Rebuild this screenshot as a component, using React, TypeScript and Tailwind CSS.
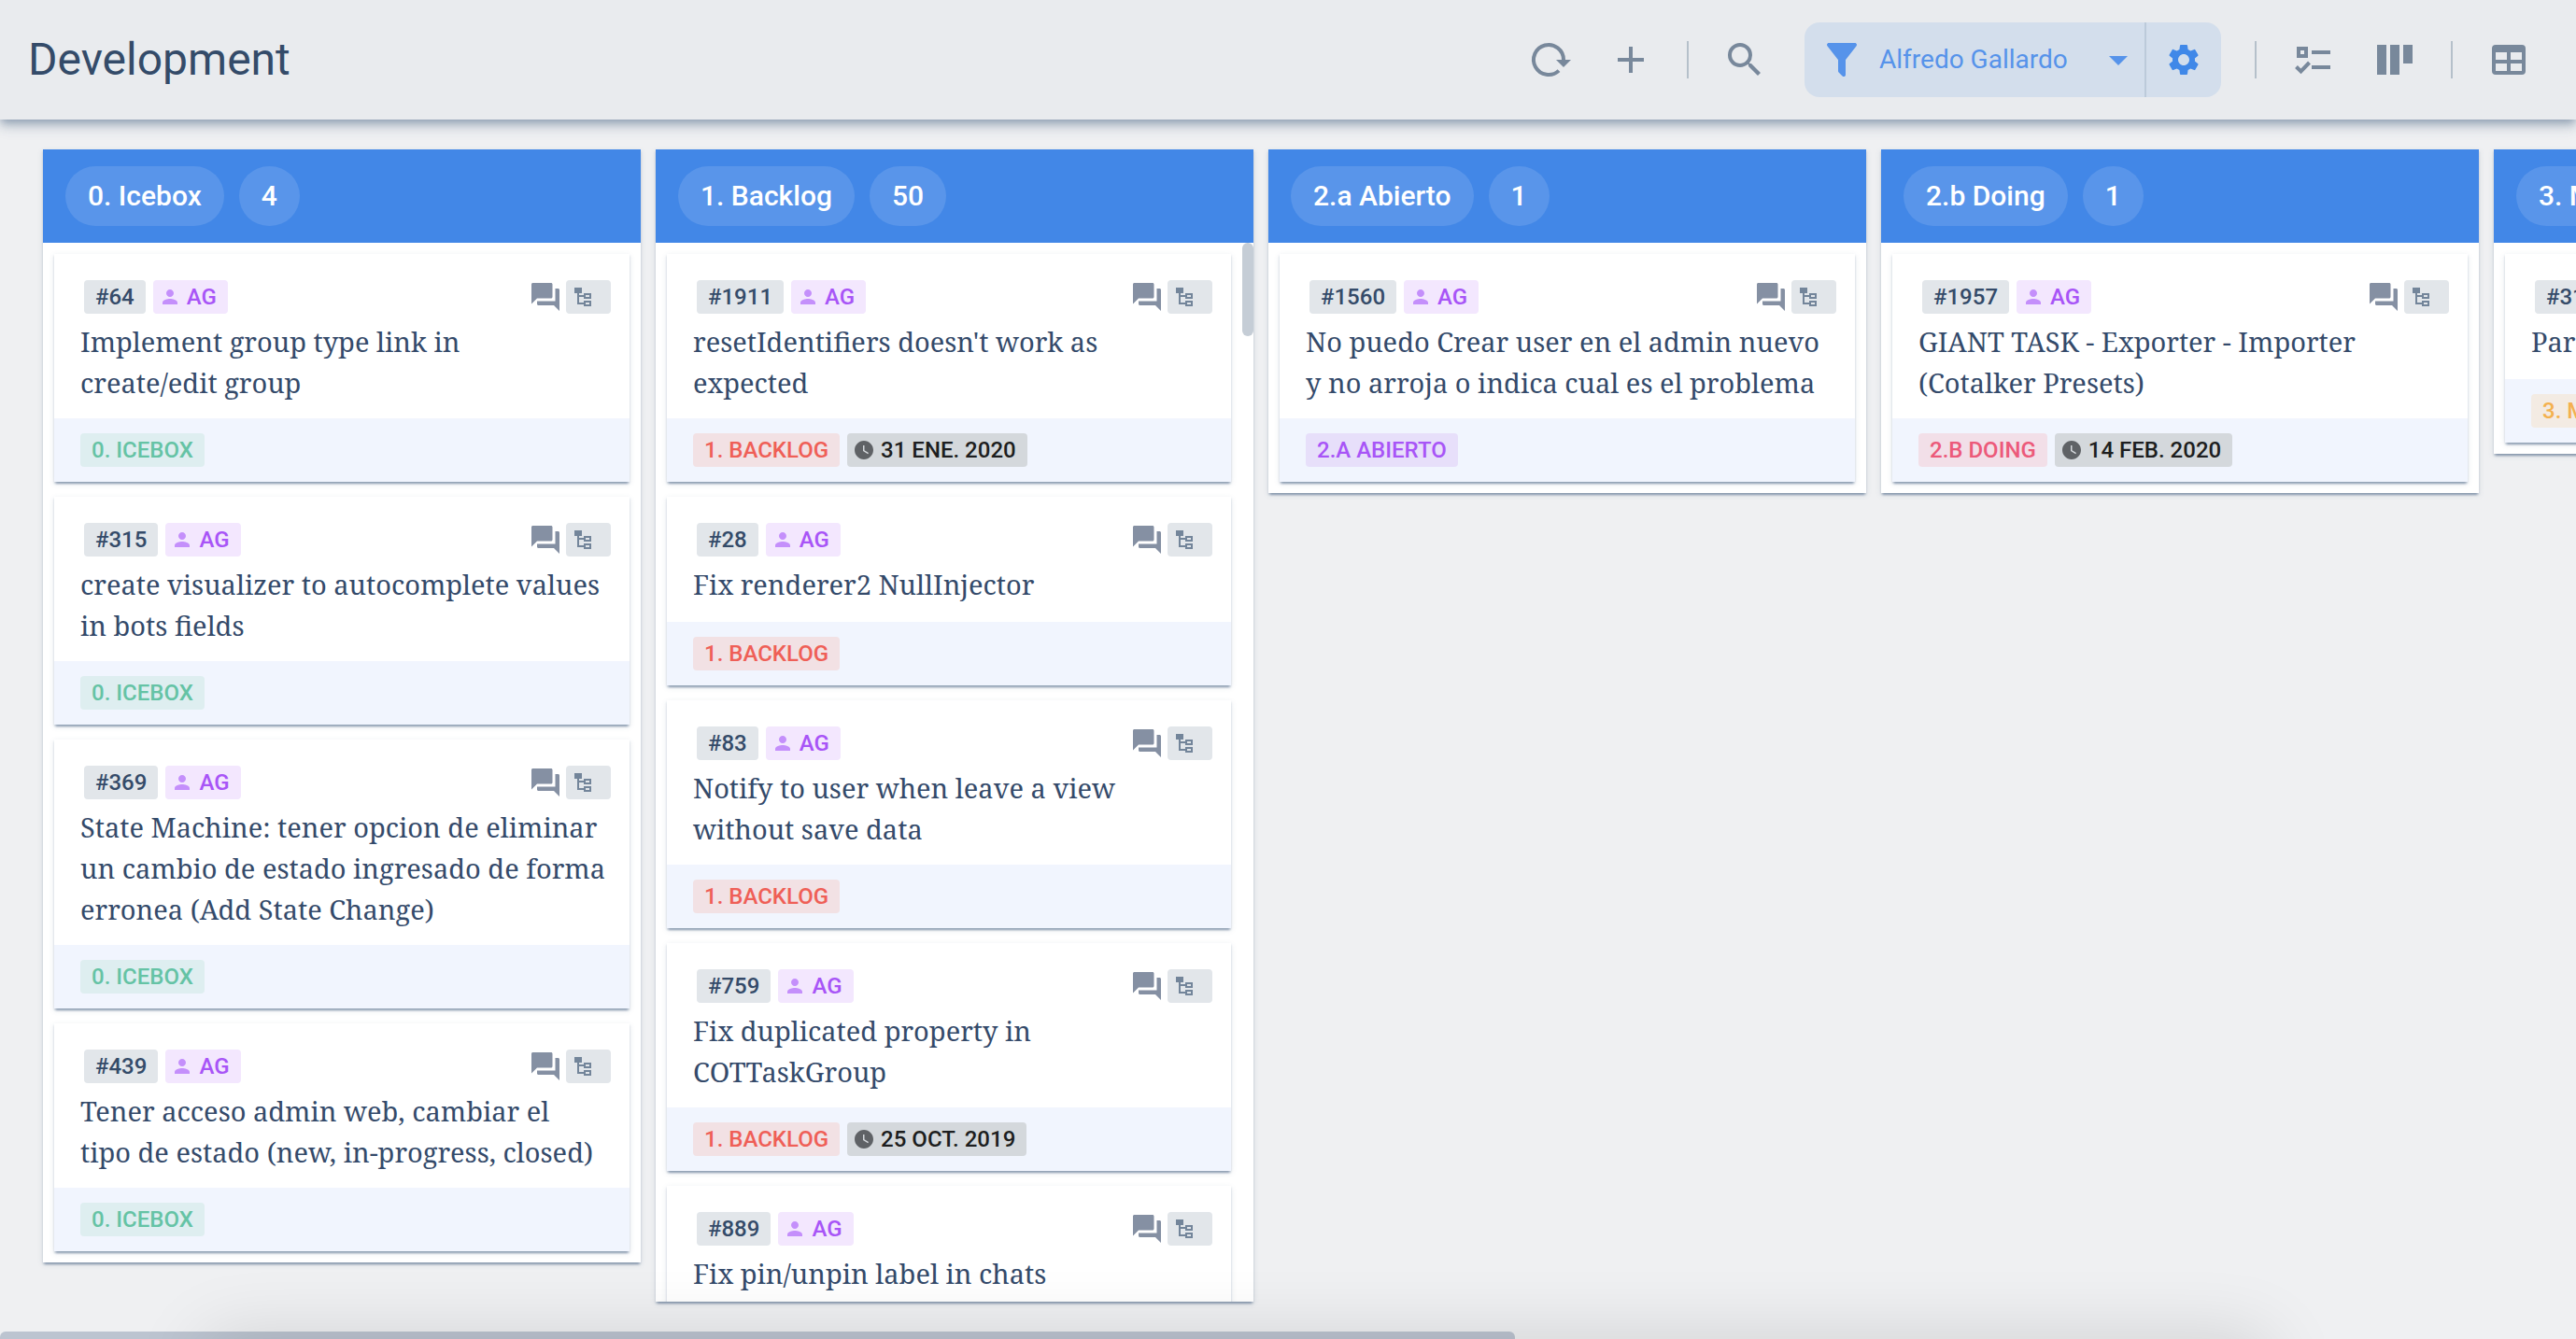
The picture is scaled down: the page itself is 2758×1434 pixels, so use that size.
import type { ReactNode } from "react";
import { MdAdd, MdArrowDropDown, MdForum, MdPerson, MdSearch, MdSettings, MdWatchLater } from "react-icons/md";

type Tone = "green" | "red" | "purple" | "pink" | "orange";

interface Task {
  id: string;
  title: string;
  due?: string;
}

interface ColumnData {
  name: string;
  count: number;
  tone: Tone;
  scrollable?: boolean;
  tasks: Task[];
}

const tones: Record<Tone, string> = {
  green: "bg-[#deeef0] text-[#65c3a5]",
  red: "bg-[#f2e1e4] text-[#ef5f57]",
  purple: "bg-[#e7dffa] text-[#a855f7]",
  pink: "bg-[#f2dfe8] text-[#ec5a7a]",
  orange: "bg-[#f3ebe3] text-[#f3b14f]",
};

const columns: ColumnData[] = [
  {
    name: "0. Icebox",
    count: 4,
    tone: "green",
    tasks: [
      { id: "#64", title: "Implement group type link in\ncreate/edit group" },
      { id: "#315", title: "create visualizer to autocomplete values\nin bots fields" },
      {
        id: "#369",
        title: "State Machine: tener opcion de eliminar\nun cambio de estado ingresado de forma\nerronea (Add State Change)",
      },
      { id: "#439", title: "Tener acceso admin web, cambiar el\ntipo de estado (new, in-progress, closed)" },
    ],
  },
  {
    name: "1. Backlog",
    count: 50,
    tone: "red",
    scrollable: true,
    tasks: [
      { id: "#1911", title: "resetIdentifiers doesn't work as\nexpected", due: "31 ene. 2020" },
      { id: "#28", title: "Fix renderer2 NullInjector" },
      { id: "#83", title: "Notify to user when leave a view\nwithout save data" },
      { id: "#759", title: "Fix duplicated property in\nCOTTaskGroup", due: "25 oct. 2019" },
      { id: "#889", title: "Fix pin/unpin label in chats" },
    ],
  },
  {
    name: "2.a Abierto",
    count: 1,
    tone: "purple",
    tasks: [{ id: "#1560", title: "No puedo Crear user en el admin nuevo\ny no arroja o indica cual es el problema" }],
  },
  {
    name: "2.b Doing",
    count: 1,
    tone: "pink",
    tasks: [{ id: "#1957", title: "GIANT TASK - Exporter - Importer\n(Cotalker Presets)", due: "14 feb. 2020" }],
  },
  {
    name: "3. Merge",
    count: 1,
    tone: "orange",
    tasks: [{ id: "#317", title: "Parametros" }],
  },
];

function RefreshIcon() {
  return (
    <svg viewBox="0 0 48 48" className="size-12 overflow-visible" aria-hidden="true">
      <path d="M40 25V24A16 16 0 1 0 35 35.6" fill="none" stroke="currentColor" strokeWidth="4" />
      <path d="M32 24h16l-8 8z" fill="currentColor" />
    </svg>
  );
}

function FunnelIcon() {
  return (
    <svg viewBox="0 0 24 24" className="size-12 shrink-0" fill="currentColor" aria-hidden="true">
      <path d="M14 12v7.88c.04.3-.06.62-.29.83a1 1 0 0 1-1.41 0l-2.01-2.01a1 1 0 0 1-.29-.83V12h-.03L4.21 4.62a1 1 0 0 1 .17-1.4C4.57 3.08 4.78 3 5 3h14c.22 0 .43.08.62.22a1 1 0 0 1 .17 1.4L14.03 12z" />
    </svg>
  );
}

function ChecklistIcon() {
  return (
    <svg viewBox="0 0 48 48" className="size-12" fill="none" stroke="currentColor" strokeWidth="4" aria-hidden="true">
      <path d="M9 12h8v8H9zM23 16h20M23 32h20M6.5 31.5l5 5 9-9.5" />
    </svg>
  );
}

function BoardIcon() {
  return (
    <svg viewBox="0 0 48 48" className="size-12" fill="currentColor" aria-hidden="true">
      <path d="M5 8h10v32H5zM19 8h10v32H19zM33 8h10v20H33z" />
    </svg>
  );
}

function TableIcon() {
  return (
    <svg viewBox="0 0 48 48" className="size-12" fill="currentColor" aria-hidden="true">
      <path
        fillRule="evenodd"
        d="M10 8h28a4 4 0 0 1 4 4v24a4 4 0 0 1-4 4H10a4 4 0 0 1-4-4V12a4 4 0 0 1 4-4zM10 16v8h12v-8zM26 16v8h12v-8zM10 28v8h12v-8zM26 28v8h12v-8z"
      />
    </svg>
  );
}

function TreeIcon() {
  return (
    <svg viewBox="0 0 24 24" className="size-6" fill="none" stroke="currentColor" strokeWidth="2" aria-hidden="true">
      <path d="M3 2h8v6H3z" fill="currentColor" stroke="none" />
      <path d="M7 8v11h7M7 11h7M14 9h6v4h-6zM14 17h6v4h-6z" />
    </svg>
  );
}

function ToolButton({ label, children }: { label: string; children: ReactNode }) {
  return (
    <button type="button" aria-label={label} className="flex size-20 items-center justify-center text-[#78889b]">
      {children}
    </button>
  );
}

function Divider() {
  return <div className="mx-5 h-10 w-0.5 bg-[#b5c0ca]" />;
}

function Toolbar() {
  return (
    <header className="relative z-10 flex h-32 shrink-0 items-center justify-between bg-[#e9ebee] pr-8 pl-[30px] shadow-[0_4px_8px_-2px_rgba(71,98,130,0.4),0_8px_10px_0_rgba(71,98,130,0.22),0_2px_20px_0_rgba(71,98,130,0.16)]">
      <h1 className="text-5xl text-[#344b69]">Development</h1>
      <div className="flex items-center">
        <div className="flex gap-2">
          <ToolButton label="Refresh">
            <RefreshIcon />
          </ToolButton>
          <ToolButton label="Add task">
            <MdAdd size={48} />
          </ToolButton>
        </div>
        <Divider />
        <ToolButton label="Search">
          <MdSearch size={48} />
        </ToolButton>
        <div className="mr-4 ml-6 flex h-20 items-center rounded-2xl bg-[#d3deec] text-[#5693ea]">
          <label className="flex items-center pr-1 pl-4">
            <FunnelIcon />
            <select
              aria-label="Filter by user"
              className="ml-4 w-58 appearance-none bg-transparent text-[28px] leading-10 outline-none"
            >
              <option>Alfredo Gallardo</option>
            </select>
            <MdArrowDropDown size={48} className="pointer-events-none" />
          </label>
          <button
            type="button"
            aria-label="Filter settings"
            className="box-content flex size-20 items-center justify-center border-l-2 border-[#bccada] text-[#4088e8]"
          >
            <MdSettings size={40} />
          </button>
        </div>
        <Divider />
        <div className="flex gap-2">
          <ToolButton label="Checklist view">
            <ChecklistIcon />
          </ToolButton>
          <ToolButton label="Board view">
            <BoardIcon />
          </ToolButton>
        </div>
        <Divider />
        <ToolButton label="Table view">
          <TableIcon />
        </ToolButton>
      </div>
    </header>
  );
}

function TaskCard({ task, status, tone }: { task: Task; status: string; tone: Tone }) {
  return (
    <article className="shrink-0 bg-white shadow-[0_4px_2px_-2px_rgba(71,98,130,0.4),0_2px_2px_0_rgba(71,98,130,0.24),0_2px_6px_0_rgba(71,98,130,0.16)]">
      <div className="min-h-[134px] pt-7 pb-4">
        <div className="flex h-9 items-center gap-2 pr-5 pl-8 text-2xl leading-9 font-medium">
          <span className="rounded-sm bg-[#e2e6ea] px-3 text-[#344b69]">{task.id}</span>
          <span className="flex items-center gap-1.5 rounded-sm bg-[#f3e7fe] pr-3 pl-1.5 text-[#a855f7]">
            <MdPerson size={24} className="text-[#c48ffb]" />
            AG
          </span>
          <div className="ml-auto flex gap-1">
            <button type="button" aria-label="Comments" className="text-[#8590a3]">
              <MdForum size={36} />
            </button>
            <button
              type="button"
              aria-label="Subtasks"
              className="flex h-9 w-12 items-center rounded-sm bg-[#e2e6ea] pl-1.5 text-[#73859a]"
            >
              <TreeIcon />
            </button>
          </div>
        </div>
        <h3 className="mt-2 pr-2 pl-7 font-['Roboto_Slab','Noto_Serif',serif] text-[29px] leading-11 whitespace-pre-line text-[#344a6a]">
          {task.title}
        </h3>
      </div>
      <footer className="flex gap-2 bg-[#f1f5fe] px-7 py-4 text-2xl leading-9 font-medium uppercase">
        <span className={`rounded-sm px-3 whitespace-nowrap ${tones[tone]}`}>{status}</span>
        {task.due && (
          <time className="flex items-center gap-1.5 rounded-sm bg-[#d4d8dc] pr-3 pl-1.5 text-[#1d1e20]">
            <MdWatchLater size={24} className="text-[#5f6266]" />
            {task.due}
          </time>
        )}
      </footer>
    </article>
  );
}

function Column({ column }: { column: ColumnData }) {
  return (
    <section className="flex max-h-full w-160 shrink-0 flex-col bg-white shadow-[0_4px_2px_-2px_rgba(71,98,130,0.4),0_2px_2px_0_rgba(71,98,130,0.24),0_2px_6px_0_rgba(71,98,130,0.16)]">
      <h2 className="flex shrink-0 gap-4 bg-[#4287e7] px-6 py-[18px] text-[30px] leading-16 font-medium text-white">
        <span className="rounded-full bg-white/12 px-6">{column.name}</span>
        <span className="rounded-full bg-white/12 px-6">{column.count}</span>
      </h2>
      <div className="flex min-h-0 overflow-hidden">
        <div className="flex min-w-0 flex-1 flex-col gap-4 p-3">
          {column.tasks.map((task) => (
            <TaskCard key={task.id} task={task} status={column.name} tone={column.tone} />
          ))}
        </div>
        {column.scrollable && (
          <div className="w-3 shrink-0">
            <div className="h-25 rounded-full bg-[#c5cdd6]" />
          </div>
        )}
      </div>
    </section>
  );
}

export default function App() {
  return (
    <div className="relative flex h-screen flex-col overflow-hidden bg-[#eff0f2] font-[Roboto,sans-serif]">
      <Toolbar />
      <main className="flex min-h-0 flex-1 items-start gap-4 overflow-hidden pt-8 pb-8 pl-[46px]">
        {columns.map((column) => (
          <Column key={column.name} column={column} />
        ))}
      </main>
      <div className="h-2 w-[58.8%] shrink-0 rounded-t-md bg-[#bcc4d0]" />
      <div className="pointer-events-none absolute top-full right-[12%] left-[8%] h-40 shadow-[0_0_80px_rgba(0,0,0,0.14)]" />
    </div>
  );
}
